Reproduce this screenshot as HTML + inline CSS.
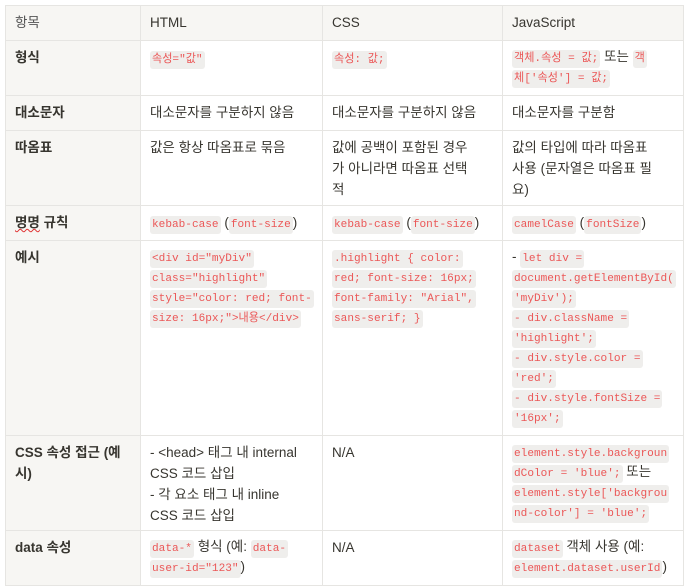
<!DOCTYPE html>
<html><head><meta charset="utf-8"><style>
body{margin:0;background:#fff;font-family:"Liberation Sans","Noto Sans CJK KR",sans-serif;font-size:13.5px;color:#37352f;}
table{position:absolute;left:5px;top:5px;border-collapse:collapse;table-layout:fixed;width:678px;}
td{border:1px solid #e6e5e2;vertical-align:top;padding:6px 9px 0 9px;line-height:21px;overflow:hidden;word-break:break-all;}
td:first-child{background:#f7f6f3;font-weight:bold;color:#37352f;word-break:normal;}
tr.h td{background:#f7f6f3;font-weight:normal;}
tr.h td:first-child{color:#555;}
code{font-family:"Liberation Mono","Noto Sans CJK KR",monospace;font-size:11.1px;color:#eb5757;background:#efeeec;border-radius:3px;padding:3px 2px;line-height:12px;word-break:normal;overflow-wrap:anywhere;-webkit-box-decoration-break:clone;box-decoration-break:clone;}
.c{line-height:20px;}
.u{text-decoration:underline wavy #e03030;text-decoration-thickness:1px;}
</style></head><body>
<table>
<colgroup><col style="width:135px"><col style="width:182px"><col style="width:180px"><col style="width:181px"></colgroup>
<tr class="h" style="height:35px"><td>항목</td><td>HTML</td><td>CSS</td><td>JavaScript</td></tr>
<tr style="height:55px"><td>형식</td><td><code>속성="값"</code></td><td><code>속성: 값;</code></td><td class="c"><code>객체.속성 = 값;</code> 또는 <code>객<br>체['속성'] = 값;</code></td></tr>
<tr style="height:35px"><td>대소문자</td><td>대소문자를 구분하지 않음</td><td>대소문자를 구분하지 않음</td><td>대소문자를 구분함</td></tr>
<tr style="height:75px"><td>따옴표</td><td>값은 항상 따옴표로 묶음</td><td>값에 공백이 포함된 경우<br>가 아니라면 따옴표 선택<br>적</td><td>값의 타입에 따라 따옴표<br>사용 (문자열은 따옴표 필<br>요)</td></tr>
<tr style="height:35px"><td><span class="u">명명</span> 규칙</td><td><code>kebab-case</code> (<code>font-size</code>)</td><td><code>kebab-case</code> (<code>font-size</code>)</td><td><code>camelCase</code> (<code>fontSize</code>)</td></tr>
<tr style="height:195px"><td>예시</td><td class="c"><code>&lt;div id="myDiv" class="highlight" style="color: red; font-size: 16px;"&gt;내용&lt;/div&gt;</code></td><td class="c"><code>.highlight { color: red; font-size: 16px; font-family: "Arial", sans-serif; }</code></td><td class="c">- <code>let div = document.getElementById('myDiv');</code><br><code>- div.className = 'highlight';</code><br><code>- div.style.color = 'red';</code><br><code>- div.style.fontSize = '16px';</code></td></tr>
<tr style="height:95px"><td>CSS 속성 접근 (예시)</td><td style="word-break:normal">- &lt;head&gt; 태그 내 internal<br>CSS 코드 삽입<br>- 각 요소 태그 내 inline<br>CSS 코드 삽입</td><td>N/A</td><td class="c"><code>element.style.backgroun<br>dColor = 'blue';</code> 또는 <code>element.style['backgrou<br>nd-color'] = 'blue';</code></td></tr>
<tr style="height:55px"><td>data 속성</td><td class="c"><code>data-*</code> 형식 (예: <code>data-user-id="123"</code>)</td><td>N/A</td><td class="c"><code>dataset</code> 객체 사용 (예: <code>element.dataset.userId</code>)</td></tr>
</table>
</body></html>
